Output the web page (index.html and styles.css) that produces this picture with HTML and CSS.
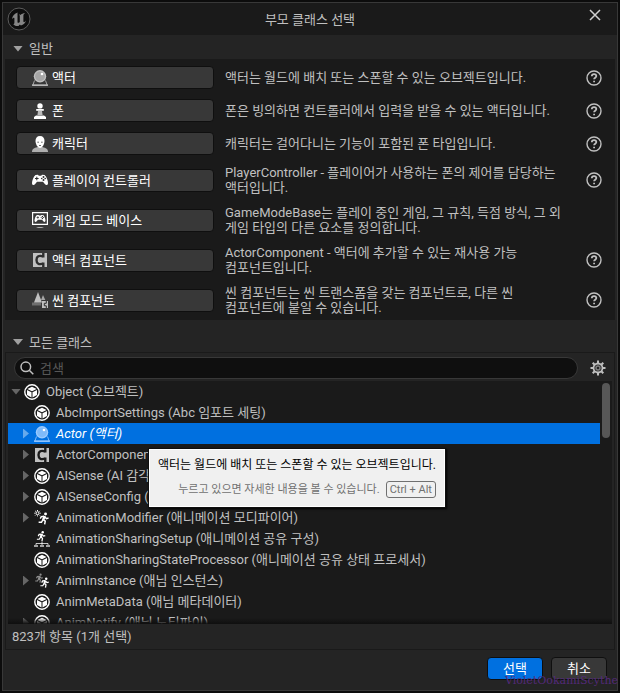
FILE: index.html
```html
<!DOCTYPE html>
<html lang="ko">
<head>
    <meta charset="UTF-8">
    <meta name="viewport" content="width=device-width, initial-scale=1.0">
    <title>부모 클래스 선택</title>
    <link rel="stylesheet" href="styles.css">
</head>
<body>
    <!-- shared icons -->
    <svg class="sprite" aria-hidden="true">
        <symbol id="i-actor" viewBox="0 0 16 16">
            <path d="M2.500 10.500L.8 15.300h14.400l-1.700-4.800" class="thin" opacity=".8"/>
            <path d="M0 14.300h16V16H0z" opacity=".8"/>
            <circle cx="8" cy="6.300" r="6.200"/>
            <circle cx="8" cy="6.300" r="4.900" opacity=".18" class="hole"/>
            <circle cx="10" cy="4" r="1.300" class="shine"/>
        </symbol>
        <symbol id="i-pawn" viewBox="0 0 16 16">
            <circle cx="8" cy="2.900" r="2.700"/>
            <path d="M4.200 6h7.600v1.800H4.200z"/>
            <path d="M6 8h4l.6 4H5.400z" opacity=".65"/>
            <path d="M4 12.500h8l2 1.500v2H2v-2z"/>
        </symbol>
        <symbol id="i-character" viewBox="0 0 16 16">
            <path d="M0 16c0-3 2-4 5.500-5h5c3.500 1 5.500 2 5.500 5z" opacity=".6"/>
            <path d="M8 0c3 0 4.600 2 4.500 5S10.500 12 8 12 3.600 8 3.500 5 5 0 8 0z"/>
            <path d="M5.300 6.200h1.700M9 6.200h1.700M7 9.500h2" class="cut" opacity=".7"/>
        </symbol>
        <symbol id="i-pad" viewBox="0 0 16 16">
            <path d="M3.500 3L6 2.800l.8 1h2.400l.8-1 2.500.2c2 1.500 3.500 5.500 3.500 8 0 2.500-2 2.500-3.200 1L11 9.800H5L3.200 12C2 13.500 0 13.500 0 11c0-2.500 1.500-6.500 3.500-8z"/>
            <path d="M3 6.500h3.600M4.800 4.700v3.600" class="cut"/>
            <circle cx="11.500" cy="5" r="1" class="hole"/>
            <circle cx="11.500" cy="8" r="1" class="hole"/>
            <circle cx="9.700" cy="6.500" r=".8" class="hole"/>
            <circle cx="13.200" cy="6.500" r=".8" class="hole"/>
        </symbol>
        <symbol id="i-gamemode" viewBox="0 0 16 16">
            <path d="M0 0h16v13H0zM1.200 1.200v10.600h13.600V1.200z" fill-rule="evenodd"/>
            <path d="M4 16c1-1.500 7-1.500 8 0z" opacity=".6"/>
            <svg x="2" y="1" width="12" height="11"><use href="#i-pad"/></svg>
        </symbol>
        <symbol id="i-component" viewBox="0 0 16 16">
            <path d="M1 1h14v14H1z"/>
            <path d="M11.300 1v4.500M11.300 10.500V15M11.300 4.600C7 2.800 4.500 4.500 4.500 8s2.500 5.200 6.800 3.400" class="cut" stroke-width="2.400"/>
        </symbol>
        <symbol id="i-scene" viewBox="0 0 16 16">
            <path d="M6 0l4 10.500H2z"/>
            <path d="M11 3l2.300 5H9z" opacity=".8"/>
            <path d="M0 10.500h9v3H0z" opacity=".4"/>
            <path d="M10 9h6v7h-6z"/>
            <path d="M14.300 9v2.300h-2v2.500h2V16" class="cut"/>
        </symbol>
        <symbol id="i-object" viewBox="0 0 16 16">
            <circle cx="8" cy="8" r="7.200" class="ring"/>
            <path d="M8 2.700l4.600 2.300L8 7.300 3.400 5zM3 6l4.500 2.300v5.200L3 11.100zM13 6L8.500 8.300v5.200l4.500-2.400z"/>
        </symbol>
        <symbol id="i-runner" viewBox="0 0 16 16">
            <circle cx="10.500" cy="1.900" r="1.800"/>
            <path d="M8.800 4.200L7.200 8.500l3 2-.8 4.200M7.200 9l-1.700 3H2M8.800 4.500L5.300 5 4 7.500M9.500 5l2 2.500 2.700-.7" class="limb"/>
            <path d="M8 4l2.300.6-.8 4.400-2.500-.5z"/>
        </symbol>
        <symbol id="i-modifier" viewBox="0 0 16 16">
            <circle cx="3.500" cy="3.200" r="1.500" class="thin"/>
            <path d="M3.500 0v1M3.500 5.400v1M.3 3.200h1M5.700 3.200h1M1.200.9l.8.8M5 4.700l.8.8M5.800.9l-.8.800M2 4.700l-.8.800" class="thin"/>
            <svg x="3" y="2" width="13" height="14"><use href="#i-runner"/></svg>
        </symbol>
        <symbol id="i-sharing" viewBox="0 0 16 16">
            <svg x="1" y="0" width="12" height="11"><use href="#i-runner"/></svg>
            <path d="M8 10.500v2M2 14v-1.500h12V14M8 12v2" class="thin" opacity=".75"/>
            <path d="M0 14h4v2H0zM6 14h4v2H6zM12 14h4v2h-4z" opacity=".6"/>
        </symbol>
        <symbol id="i-instance" viewBox="0 0 16 16">
            <svg x="0" y="0" width="10" height="11" opacity=".5"><use href="#i-runner"/></svg>
            <svg x="5" y="4" width="11" height="12"><use href="#i-runner"/></svg>
        </symbol>
        <symbol id="i-help" viewBox="0 0 16 16">
            <circle cx="8" cy="8" r="7" class="ring"/>
            <path d="M5.800 6.300c0-3 4.500-2.800 4.500-.2 0 1.600-2.200 1.600-2.200 3.200M8.100 10.700v1.600" class="mark"/>
        </symbol>
    </svg>

    <div class="window">
        <header class="titlebar">
            <svg class="logo" viewBox="0 0 24 24" aria-hidden="true">
                <circle cx="12" cy="12" r="11" fill="#0d0d0d" stroke="#5c5c5c"/>
                <path fill="#858585" d="M10.800 5.500C7.500 6.500 5.200 9 5 12.200c.8-1.200 1.600-1.700 2-1.500.5.200.4.800.4 1.500v3.500c0 1-.5 1.200-1.200 1.200 1.500 2 4 2.400 5.300 2l1.400-1.300 1 1c2.500-.6 4.500-2.600 5.100-5-1 1.200-1.700 1.700-2.200 1.500-.4-.2-.4-.6-.4-1.200V8.600c0-1.200 1-2.200 1.800-2.700-1.900 0-3.800 1-4.800 2.200-.4-.4-.9-.5-1.400-.5.500.4.800.9.800 1.500v5.800c-.8.900-1.600 1.100-2 .8-.3-.2-.3-.6-.3-1.200V7.300c0-.8-.1-1.300.3-1.800z"/>
            </svg>
            <h1 class="title">부모 클래스 선택</h1>
            <button class="close" type="button" aria-label="닫기">
                <svg viewBox="0 0 12 12"><path d="M1 1l10 10M11 1L1 11"/></svg>
            </button>
        </header>

        <h2 class="section"><span class="arrow down"></span>일반</h2>
        <div class="common">
            <div class="choice">
                <button class="btn" type="button"><svg class="icon dim"><use href="#i-actor"/></svg>액터</button>
                <p class="desc">액터는 월드에 배치 또는 스폰할 수 있는 오브젝트입니다.</p>
                <a class="help" href="#" aria-label="액터 도움말"><svg class="icon"><use href="#i-help"/></svg></a>
            </div>
            <div class="choice">
                <button class="btn" type="button"><svg class="icon"><use href="#i-pawn"/></svg>폰</button>
                <p class="desc">폰은 빙의하면 컨트롤러에서 입력을 받을 수 있는 액터입니다.</p>
                <a class="help" href="#" aria-label="폰 도움말"><svg class="icon"><use href="#i-help"/></svg></a>
            </div>
            <div class="choice">
                <button class="btn" type="button"><svg class="icon"><use href="#i-character"/></svg>캐릭터</button>
                <p class="desc">캐릭터는 걸어다니는 기능이 포함된 폰 타입입니다.</p>
                <a class="help" href="#" aria-label="캐릭터 도움말"><svg class="icon"><use href="#i-help"/></svg></a>
            </div>
            <div class="choice">
                <button class="btn" type="button"><svg class="icon"><use href="#i-pad"/></svg>플레이어 컨트롤러</button>
                <p class="desc">PlayerController - 플레이어가 사용하는 폰의 제어를 담당하는 액터입니다.</p>
                <a class="help" href="#" aria-label="플레이어 컨트롤러 도움말"><svg class="icon"><use href="#i-help"/></svg></a>
            </div>
            <div class="choice">
                <button class="btn" type="button"><svg class="icon"><use href="#i-gamemode"/></svg>게임 모드 베이스</button>
                <p class="desc">GameModeBase는 플레이 중인 게임, 그 규칙, 득점 방식, 그 외 게임 타입의 다른 요소를 정의합니다.</p>
            </div>
            <div class="choice">
                <button class="btn" type="button"><svg class="icon dim"><use href="#i-component"/></svg>액터 컴포넌트</button>
                <p class="desc">ActorComponent - 액터에 추가할 수 있는 재사용 가능 컴포넌트입니다.</p>
                <a class="help" href="#" aria-label="액터 컴포넌트 도움말"><svg class="icon"><use href="#i-help"/></svg></a>
            </div>
            <div class="choice">
                <button class="btn" type="button"><svg class="icon dim"><use href="#i-scene"/></svg>씬 컴포넌트</button>
                <p class="desc">씬 컴포넌트는 씬 트랜스폼을 갖는 컴포넌트로, 다른 씬 컴포넌트에 붙일 수 있습니다.</p>
                <a class="help" href="#" aria-label="씬 컴포넌트 도움말"><svg class="icon"><use href="#i-help"/></svg></a>
            </div>
        </div>

        <h2 class="section all"><span class="arrow down"></span>모든 클래스</h2>
        <div class="browser">
            <div class="toolbar">
                <label class="search">
                    <svg viewBox="0 0 14 14" aria-hidden="true"><circle cx="5.800" cy="5.800" r="4.800"/><path d="M9.300 9.300l4 4"/></svg>
                    <input type="text" placeholder="검색" aria-label="검색">
                </label>
                <button class="gear" type="button" aria-label="설정">
                    <svg viewBox="0 0 16 16">
                        <path d="M8 .5v3M8 12.500v3M.5 8h3M12.500 8h3M2.700 2.700l2 2M11.300 11.300l2 2M13.300 2.700l-2 2M4.700 11.300l-2 2" stroke-width="2"/>
                        <circle cx="8" cy="8" r="4.500" stroke-width="1.800"/>
                        <circle cx="8" cy="8" r="2" opacity=".6"/>
                    </svg>
                </button>
            </div>

            <div class="list">
                <ul class="tree">
                    <li class="row root"><span class="toggle"><span class="arrow down"></span></span><svg class="icon"><use href="#i-object"/></svg>Object (오브젝트)</li>
                    <li class="row"><span class="toggle"></span><svg class="icon"><use href="#i-object"/></svg>AbcImportSettings (Abc 임포트 세팅)</li>
                    <li class="row selected">
                        <span class="toggle"><span class="arrow"></span></span><svg class="icon"><use href="#i-actor"/></svg><em>Actor (액터)</em>
                        <div class="tooltip" role="tooltip">
                            <p>액터는 월드에 배치 또는 스폰할 수 있는 오브젝트입니다.</p>
                            <p class="more">누르고 있으면 자세한 내용을 볼 수 있습니다. <kbd>Ctrl + Alt</kbd></p>
                        </div>
                    </li>
                    <li class="row"><span class="toggle"><span class="arrow"></span></span><svg class="icon dim"><use href="#i-component"/></svg>ActorComponent (액터 컴포넌트)</li>
                    <li class="row"><span class="toggle"><span class="arrow"></span></span><svg class="icon"><use href="#i-object"/></svg>AISense (AI 감각)</li>
                    <li class="row"><span class="toggle"><span class="arrow"></span></span><svg class="icon"><use href="#i-object"/></svg>AISenseConfig (AI 감각 환경설정)</li>
                    <li class="row"><span class="toggle"><span class="arrow"></span></span><svg class="icon"><use href="#i-modifier"/></svg>AnimationModifier (애니메이션 모디파이어)</li>
                    <li class="row"><span class="toggle"></span><svg class="icon"><use href="#i-sharing"/></svg>AnimationSharingSetup (애니메이션 공유 구성)</li>
                    <li class="row"><span class="toggle"></span><svg class="icon"><use href="#i-object"/></svg>AnimationSharingStateProcessor (애니메이션 공유 상태 프로세서)</li>
                    <li class="row"><span class="toggle"><span class="arrow"></span></span><svg class="icon"><use href="#i-instance"/></svg>AnimInstance (애님 인스턴스)</li>
                    <li class="row"><span class="toggle"></span><svg class="icon"><use href="#i-object"/></svg>AnimMetaData (애님 메타데이터)</li>
                    <li class="row"><span class="toggle"><span class="arrow"></span></span><svg class="icon"><use href="#i-object"/></svg>AnimNotify (애님 노티파이)</li>
                </ul>
                <div class="scrollbar"><div class="thumb"></div></div>
            </div>
            <p class="status">823개 항목 (1개 선택)</p>
        </div>

        <footer class="actions">
            <button class="action primary" type="button">선택</button>
            <button class="action" type="button">취소</button>
        </footer>
    </div>
    <div class="watermark">VioletOokamiScythe</div>
</body>
</html>
```
FILE: styles.css
```css
*{
    box-sizing: border-box;
    padding: 0;
    margin: 0;
}
body{
    height: 100vh;
    padding: 2px;
    background-color: #0c0c0c;
    color: #c0c0c0;
    font: 13px/15px Roboto, "Noto Sans CJK KR", sans-serif;
    word-break: keep-all;
    position: relative;
    overflow: hidden;
}
button{
    font: inherit;
    color: inherit;
    background: none;
    border: 0;
}
.sprite{
    position: absolute;
    width: 0;
    height: 0;
}
.window{
    display: flex;
    flex-direction: column;
    height: 100%;
    border: 1px solid #383838;
    background-color: #242424;
}

/* icons, --back is the colour seen through the holes */
.icon{
    --back: #2e2e2e;
    flex: none;
    width: 16px;
    height: 16px;
    fill: #fff;
    stroke: none;
    color: #fff;
}
.icon.dim{
    fill: #c0c0c0;
    color: #c0c0c0;
}
.hole{
    fill: var(--back);
}
.shine{
    fill: #fff;
}
.cut{
    fill: none;
    stroke: var(--back);
}
.ring{
    fill: none;
    stroke: currentColor;
    stroke-width: 1.4;
}
.limb{
    fill: none;
    stroke: currentColor;
    stroke-width: 1.8;
}
.thin{
    fill: none;
    stroke: currentColor;
    stroke-width: 1;
}
.mark{
    fill: none;
    stroke: currentColor;
    stroke-width: 1.8;
}
.arrow{
    width: 6px;
    height: 10px;
    background-color: #666;
    clip-path: polygon(0 0, 100% 50%, 0 100%);
}
.arrow.down{
    width: 10px;
    height: 6px;
    clip-path: polygon(0 0, 100% 0, 50% 100%);
}

/* title */
.titlebar{
    display: grid;
    grid-template-columns: 24px 1fr 24px;
    align-items: center;
    height: 32px;
    padding: 0 4px;
    background-color: #1a1a1a;
}
.logo{
    width: 24px;
    height: 24px;
}
.title{
    font-size: 13px;
    font-weight: 400;
    text-align: center;
}
.close{
    display: flex;
    align-items: center;
    align-self: start;
    height: 24px;
}
.close svg{
    width: 12px;
    height: 12px;
    fill: none;
    stroke: #d0d0d0;
    stroke-width: 1.5;
}

/* sections */
.section{
    display: flex;
    align-items: center;
    gap: 6px;
    height: 24px;
    padding: 3px 10px 0;
    font-size: 13px;
    font-weight: 400;
}
.section .arrow{
    background-color: #a0a0a0;
}
.section.all{
    height: 32px;
    padding-top: 12px;
}
.common{
    margin: 0 2px;
    padding-top: 2px;
    background-color: #1a1a1a;
}
.choice{
    display: grid;
    grid-template-columns: 198px 1fr 16px;
    gap: 11px;
    align-items: center;
    padding: 5px 13px 5px 11px;
}
.btn{
    display: flex;
    align-items: center;
    gap: 4px;
    height: 23px;
    padding: 0 15px;
    border: 1px solid #0f0f0f;
    border-radius: 4px;
    background-color: #383838;
    color: #fff;
}
.desc{
    padding-right: 5px;
}
.help{
    display: flex;
}
.help .icon{
    color: #c0c0c0;
}

/* class browser */
.browser{
    flex: 1;
    min-height: 0;
    display: flex;
    flex-direction: column;
    margin: 0 2px;
    border: 1px solid #1a1a1a;
    padding: 0 2px;
}
.toolbar{
    display: flex;
    align-items: center;
    gap: 12px;
    padding: 4px 6px 2px;
}
.search{
    flex: 1;
    display: flex;
    align-items: center;
    gap: 6px;
    height: 22px;
    padding: 0 5px;
    border: 1px solid #383838;
    border-radius: 11px;
    background-color: #0f0f0f;
}
.search svg{
    width: 14px;
    height: 14px;
    fill: none;
    stroke: #c0c0c0;
    stroke-width: 1.5;
}
.search input{
    flex: 1;
    min-width: 0;
    border: 0;
    outline: 0;
    background: none;
    color: #c0c0c0;
    font: inherit;
}
.search input::placeholder{
    color: #575757;
}
.gear{
    width: 16px;
    height: 16px;
}
.gear svg{
    display: block;
    fill: none;
    stroke: #c0c0c0;
    stroke-width: 1.4;
}
.list{
    flex: 1;
    min-height: 0;
    display: flex;
    background-color: #1a1a1a;
    position: relative;
    overflow: hidden;
}
/* shadow over the last visible row */
.list::after{
    content: "";
    position: absolute;
    left: 0;
    right: 0;
    bottom: 0;
    height: 6px;
    background: linear-gradient(transparent, #0f0f0f);
}
.tree{
    flex: 1;
    list-style: none;
}
.row{
    display: flex;
    align-items: center;
    height: 21px;
    padding-left: 10px;
    white-space: nowrap;
    position: relative;
}
.row.root{
    padding-left: 0;
}
.row .icon{
    --back: #1a1a1a;
    margin-right: 6px;
}
.toggle{
    display: flex;
    justify-content: center;
    width: 16px;
}
.selected{
    background-color: #0070e0;
    color: #fff;
    z-index: 1;
}
.selected .arrow{
    background-color: #66a9ec;
}
.selected .icon{
    --back: #0070e0;
    fill: #9ccbff;
    color: #9ccbff;
}
.scrollbar{
    width: 12px;
    padding: 2px;
}
.thumb{
    height: 55px;
    border-radius: 4px;
    background-color: #575757;
}
.status{
    height: 25px;
    padding: 5px 4px;
}

/* tooltip */
.tooltip{
    position: absolute;
    left: 141px;
    top: 26px;
    padding: 8px;
    border: 1px solid #fff;
    background-color: #f0f0f0;
    box-shadow: 0 0 0 1px #0f0f0f, 1px 1px 2px 1px #000;
    color: #000;
    font-size: 12px;
}
.more{
    display: flex;
    align-items: center;
    justify-content: flex-end;
    gap: 6px;
    margin-top: 8px;
    color: #707070;
    font-size: 11px;
}
kbd{
    padding: 0 3px;
    border: 1px solid #707070;
    border-radius: 3px;
    font: inherit;
}

/* bottom buttons */
.actions{
    display: flex;
    justify-content: flex-end;
    gap: 8px;
    padding: 7px 10px 10px;
}
.action{
    width: 56px;
    height: 23px;
    border: 1px solid #0f0f0f;
    border-radius: 4px;
    background-color: #383838;
    color: #fff;
}
.action.primary{
    background-color: #0070e0;
}
.watermark{
    position: absolute;
    right: 2px;
    bottom: 5px;
    color: #532a78;
    font: 11px/14px "DejaVu Serif", serif;
}
```
